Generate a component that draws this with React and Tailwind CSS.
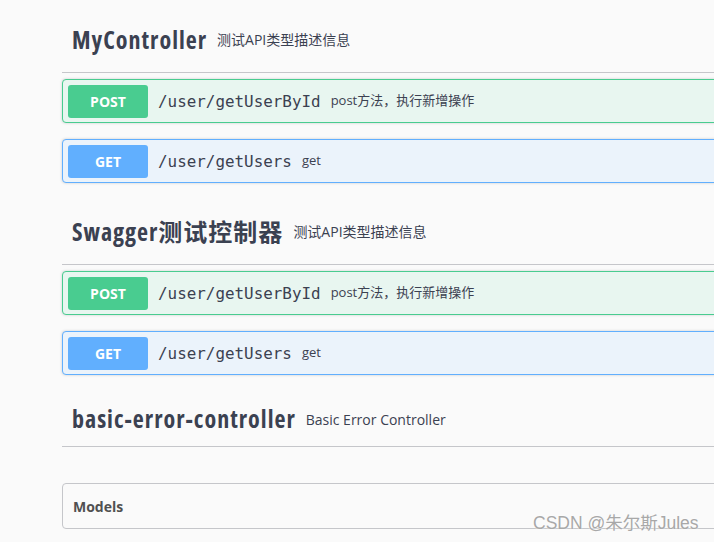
import React from 'react';

const sans = { fontFamily: '"Open Sans", "Noto Sans CJK SC", sans-serif' };

const OpBlock = ({ method, path, summary }) => {
  const isPost = method === 'POST';
  return (
    <div
      className={`flex items-center h-[44px] px-[5px] rounded-[4px] border ${
        isPost ? 'border-[#49cc90] bg-[#e8f6f0]' : 'border-[#61affe] bg-[#ebf3fb]'
      } shadow-[0_0_3px_rgba(0,0,0,0.19)]`}
    >
      <span
        className={`w-[80px] h-[33px] flex items-center justify-center rounded-[3px] text-white text-[14px] font-bold ${
          isPost ? 'bg-[#49cc90]' : 'bg-[#61affe]'
        }`}
        style={sans}
      >
        {method}
      </span>
      <span className="ml-[10px] pt-[2px] text-[15.9px] text-[#3b4151] font-[DejaVu_Sans_Mono,monospace]">
        {path}
      </span>
      <span className="ml-[10px] text-[13px] text-[#3b4151]" style={sans}>
        {summary}
      </span>
    </div>
  );
};

const TagHeader = ({ name, desc, h }) => (
  <div className={`flex items-center pl-[10px] border-b border-[#c5c6ca] ${h}`}>
    <span
      className="text-[24px] font-bold text-[#3b4151] font-stretch-semi-condensed tracking-[1px]"
      style={sans}
    >
      {name}
    </span>
    <span className="ml-[10px] text-[14px] text-[#3b4151]" style={sans}>
      {desc}
    </span>
  </div>
);

export default function App() {
  return (
    <div className="relative w-[714px] h-[542px] overflow-hidden bg-[#fafafa]">
      <div className="pl-[62px] pt-[7px]">
        <div className="w-[700px]">
          <TagHeader name="MyController" desc="测试API类型描述信息" h="h-[66px]" />
          <div className="mt-[6px] flex flex-col gap-[16px]">
            <OpBlock method="POST" path="/user/getUserById" summary="post方法，执行新增操作" />
            <OpBlock method="GET" path="/user/getUsers" summary="get" />
          </div>

          <div className="mt-[16px]">
            <TagHeader name="Swagger测试控制器" desc="测试API类型描述信息" h="h-[66px]" />
          </div>
          <div className="mt-[6px] flex flex-col gap-[16px]">
            <OpBlock method="POST" path="/user/getUserById" summary="post方法，执行新增操作" />
            <OpBlock method="GET" path="/user/getUsers" summary="get" />
          </div>

          <div className="mt-[17px]">
            <TagHeader name="basic-error-controller" desc="Basic Error Controller" h="h-[55px]" />
          </div>

          <div className="mt-[36px] h-[46px] flex items-center pl-[10px] border border-[#c5c6ca] rounded-[4px]">
            <span className="text-[14px] font-bold text-[#505050]" style={sans}>
              Models
            </span>
          </div>
        </div>
      </div>
      <div
        className="absolute left-[533px] top-[510px] text-[17.5px] text-[#a8a8a8] [text-shadow:0_0_2px_#ffffff]"
        style={{ fontFamily: '"Liberation Sans", "Noto Sans CJK SC", sans-serif' }}
      >
        CSDN @朱尔斯Jules
      </div>
    </div>
  );
}
